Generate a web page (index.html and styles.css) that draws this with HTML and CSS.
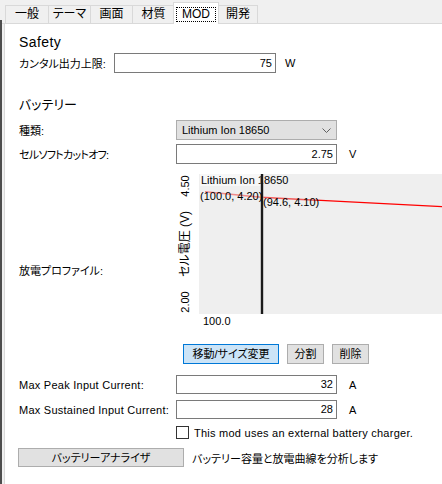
FILE: index.html
```html
<!DOCTYPE html>
<html lang="ja">
<head>
    <meta charset="UTF-8">
    <title>MOD 設定</title>
    <link rel="stylesheet" href="styles.css">
</head>
<body>

<div class="window">
    <div class="edge"></div>
    <div class="main">
        <div class="tabs">
            <div class="tab first">一般</div>
            <div class="tab">テーマ</div>
            <div class="tab">画面</div>
            <div class="tab">材質</div>
            <div class="tab active"><span class="focus">MOD</span></div>
            <div class="tab last">開発</div>
        </div>

        <div class="pane">
            <div class="group-title">Safety</div>
            <div class="row">
                <label class="label short">カンタル出力上限:</label>
                <div class="textbox narrow">75</div>
                <span class="unit">W</span>
            </div>

            <div class="group-title battery">バッテリー</div>
            <div class="row select-row">
                <label class="label">種類:</label>
                <div class="select">
                    <span>Lithium Ion 18650</span>
                    <svg class="chevron" width="9" height="5" viewBox="0 0 9 5"><polyline points="0.5,0.5 4.5,4.5 8.5,0.5" fill="none" stroke="#606060" stroke-width="1"/></svg>
                </div>
            </div>
            <div class="row cutoff-row">
                <label class="label tight">セルソフトカットオフ:</label>
                <div class="textbox">2.75</div>
                <span class="unit wide">V</span>
            </div>

            <div class="chart-row">
                <label class="label profile">放電プロファイル:</label>
                <svg class="chart" width="266" height="160" viewBox="0 0 266 160">
                    <rect x="23" y="4" width="243" height="140" fill="#efefef"/>
                    <rect x="24" y="4" width="61" height="12" fill="#f7f7f7"/>
                    <text x="25" y="14" class="c-text">Lithium Ion 18650</text>
                    <polyline points="29,21.7 85,27.3" fill="none" stroke="#f08a8a" stroke-width="1.5"/>
                    <polyline points="85,27.3 140,30.2" fill="none" stroke="#f25858" stroke-width="1.5"/>
                    <polyline points="140,30.2 266,36.7" fill="none" stroke="#ff0000" stroke-width="1.3"/>
                    <rect x="84.5" y="4" width="3" height="140" fill="#9a9a9a"/>
                    <rect x="85" y="4" width="2" height="140" fill="#1a1a1a"/>
                    <text x="24" y="30" class="c-text">(100.0, 4.20)</text>
                    <text x="87" y="35.5" class="c-text">(94.6, 4.10)</text>
                    <text x="27" y="155" class="c-text">100.0</text>
                    <text transform="translate(13,16) rotate(-90)" text-anchor="middle" class="c-text">4.50</text>
                    <text transform="translate(13,132) rotate(-90)" text-anchor="middle" class="c-text">2.00</text>
                    <text transform="translate(13,74) rotate(-90)" text-anchor="middle" class="c-axis">セル電圧 (V)</text>
                </svg>
            </div>

            <div class="button-row">
                <button class="btn primary">移動/サイズ変更</button>
                <button class="btn small">分割</button>
                <button class="btn small">削除</button>
            </div>

            <div class="row current-row">
                <label class="label en">Max Peak Input Current:</label>
                <div class="textbox">32</div>
                <span class="unit wide">A</span>
            </div>
            <div class="row current-row sustained">
                <label class="label en">Max Sustained Input Current:</label>
                <div class="textbox">28</div>
                <span class="unit wide">A</span>
            </div>

            <div class="check-row">
                <span class="checkbox"></span>
                <span class="en">This mod uses an external battery charger.</span>
            </div>

            <div class="analyzer-row">
                <button class="btn analyzer">バッテリーアナライザ</button>
                <span class="hint">バッテリー容量と放電曲線を分析します</span>
            </div>
        </div>
    </div>
</div>

</body>
</html>
```

FILE: styles.css
```css
html, body {
    margin: 0;
    padding: 0;
}
body {
    width: 442px;
    height: 484px;
    overflow: hidden;
    background-color: #ffffff;
    font-family: "Liberation Sans", "Noto Sans CJK JP", sans-serif;
    font-size: 11px;
    font-feature-settings: "palt";
    color: #000000;
}
.window {
    display: flex;
    height: 484px;
    background-color: #f0f0f0;
}
.edge {
    width: 2px;
    margin-top: 20px;
    background-color: #4d4d4d;
}
.main {
    flex: 1;
    display: flex;
    flex-direction: column;
    min-width: 0;
}

/* tabs */
.tabs {
    display: flex;
    align-items: flex-end;
    height: 23px;
    padding-left: 3px;
    border-bottom: 1px solid #d9d9d9;
    background-color: #f0f0f0;
}
.tab {
    box-sizing: border-box;
    width: 43px;
    height: 18px;
    margin-left: -1px;
    border: 1px solid #d9d9d9;
    border-bottom: none;
    background-color: #f0f0f0;
    text-align: center;
    line-height: 16px;
    font-size: 12px;
}
.tab.first {
    width: 44px;
    margin-left: 0;
}
.tab.active {
    position: relative;
    z-index: 1;
    width: 46px;
    height: 22px;
    margin-left: -2px;
    margin-bottom: -1px;
    background-color: #ffffff;
    padding-top: 3px;
}
.tab.last {
    width: 40px;
}
.focus {
    display: inline-block;
    padding: 0 5px 0 5px;
    border: 1px dotted #000000;
    line-height: 13px;
}

/* pane */
.pane {
    flex: 1;
    margin-left: 2px;
    border-left: 1px solid #d9d9d9;
    background-color: #ffffff;
    padding-left: 14px;
    padding-top: 9px;
}
.group-title {
    font-size: 14px;
    letter-spacing: 0.4px;
    line-height: 18px;
}
.group-title.battery {
    margin-top: 23px;
    font-size: 13px;
    letter-spacing: 0;
}
.row {
    display: flex;
    align-items: center;
    height: 20px;
    margin-top: 2px;
}
.label {
    width: 157px;
    flex-shrink: 0;
    white-space: nowrap;
}
.label.short {
    width: 95px;
}
.label.tight {
    letter-spacing: -0.7px;
}
.en {
    letter-spacing: 0.25px;
}
.textbox {
    box-sizing: border-box;
    width: 161px;
    height: 100%;
    border: 1px solid #7a7a7a;
    padding-right: 3px;
    text-align: right;
    line-height: 18px;
}
.textbox.narrow {
    width: 162px;
}
.unit {
    margin-left: 9px;
}
.unit.wide {
    margin-left: 12px;
}
.select-row {
    margin-top: 6px;
}
.cutoff-row {
    margin-top: 4px;
}
.select {
    box-sizing: border-box;
    display: flex;
    align-items: center;
    justify-content: space-between;
    width: 161px;
    height: 20px;
    padding: 0 5px 0 5px;
    border: 1px solid #adadad;
    background-color: #e1e1e1;
}

/* chart */
.chart-row {
    display: flex;
    align-items: flex-start;
    margin-top: 6px;
}
.label.profile {
    margin-top: 92px;
}
.chart {
    display: block;
}
.c-text {
    font-family: "Liberation Sans", "Noto Sans CJK JP", sans-serif;
    font-size: 11px;
    fill: #000000;
}
.c-axis {
    font-family: "Liberation Sans", "Noto Sans CJK JP", sans-serif;
    font-size: 12px;
    fill: #000000;
}

/* buttons */
.button-row {
    display: flex;
    gap: 8px;
    margin-top: 14px;
    padding-left: 164px;
}
.btn {
    box-sizing: border-box;
    height: 20px;
    padding: 0;
    border: 1px solid #adadad;
    background-color: #e1e1e1;
    font-family: inherit;
    font-size: 11px;
    font-feature-settings: "palt";
    color: #000000;
    line-height: 16px;
}
.btn.primary {
    width: 96px;
    border-color: #0078d7;
    background-color: #cce4f7;
}
.btn.small {
    width: 37px;
}
.current-row {
    height: 19px;
    margin-top: 11px;
}
.current-row .textbox {
    line-height: 17px;
}
.current-row.sustained {
    margin-top: 6px;
}
.check-row {
    display: flex;
    align-items: center;
    height: 13px;
    margin-top: 7px;
    padding-left: 157px;
}
.checkbox {
    box-sizing: border-box;
    width: 13px;
    height: 13px;
    margin-right: 5px;
    border: 1px solid #333333;
    background-color: #ffffff;
}
.analyzer-row {
    display: flex;
    align-items: center;
    margin-top: 9px;
    margin-left: -1px;
}
.btn.analyzer {
    width: 166px;
    height: 19px;
}
.hint {
    margin-left: 8px;
}
```
